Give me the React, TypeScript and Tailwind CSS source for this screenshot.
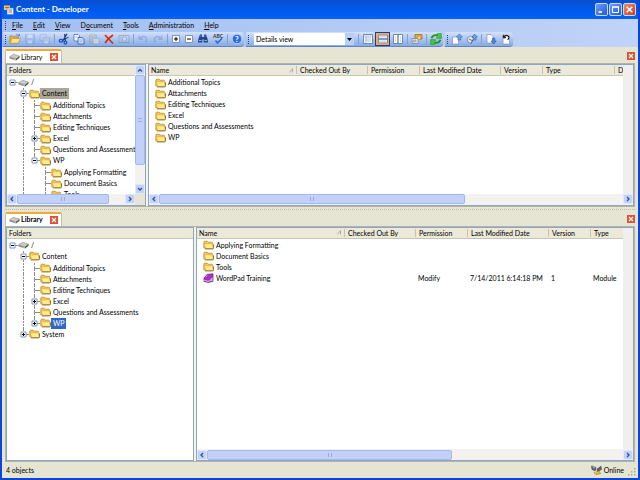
import { useState, type ReactNode } from "react";
import clsx from "clsx";

interface TreeNode {
  name: string;
  icon?: "drive" | "folder";
  state?: "open" | "closed";
  children?: TreeNode[];
}

interface LibraryItem {
  name: string;
  icon?: "folder" | "module";
  permission?: string;
  modified?: string;
  version?: string;
  type?: string;
}

const topTree: TreeNode = {
  name: "/",
  icon: "drive",
  state: "open",
  children: [
    {
      name: "Content",
      state: "open",
      children: [
        { name: "Additional Topics" },
        { name: "Attachments" },
        { name: "Editing Techniques" },
        { name: "Excel", state: "closed" },
        { name: "Questions and Assessments" },
        {
          name: "WP",
          state: "open",
          children: [
            { name: "Applying Formatting" },
            { name: "Document Basics" },
            { name: "Tools" },
          ],
        },
      ],
    },
    { name: "System", state: "closed" },
  ],
};

const bottomTree: TreeNode = {
  name: "/",
  icon: "drive",
  state: "open",
  children: [
    {
      name: "Content",
      state: "open",
      children: [
        { name: "Additional Topics" },
        { name: "Attachments" },
        { name: "Editing Techniques" },
        { name: "Excel", state: "closed" },
        { name: "Questions and Assessments" },
        { name: "WP", state: "closed" },
      ],
    },
    { name: "System", state: "closed" },
  ],
};

const topItems: LibraryItem[] = [
  { name: "Additional Topics" },
  { name: "Attachments" },
  { name: "Editing Techniques" },
  { name: "Excel" },
  { name: "Questions and Assessments" },
  { name: "WP" },
];

const bottomItems: LibraryItem[] = [
  { name: "Applying Formatting" },
  { name: "Document Basics" },
  { name: "Tools" },
  {
    name: "WordPad Training",
    icon: "module",
    permission: "Modify",
    modified: "7/14/2011 6:14:18 PM",
    version: "1",
    type: "Module",
  },
];

// text before the access key, the key, text after it
const menus: [string, string, string][] = [
  ["", "F", "ile"],
  ["", "E", "dit"],
  ["", "V", "iew"],
  ["D", "o", "cument"],
  ["", "T", "ools"],
  ["", "A", "dministration"],
  ["", "H", "elp"],
];

/* ---------- icons ---------- */

function FolderIcon() {
  return (
    <svg viewBox="0 0 11 10" className="h-[10px] w-[11px] shrink-0">
      <path d="M.8 7.8V2.2Q.8 1.2 1.8 1.2H4.2L5.2 2.2H8.6Q9.6 2.2 9.6 3.2V8H2Z" fill="#f2c54e" stroke="#bf8f34" strokeWidth=".8" />
      <path d="M1.4 3.8H8.4Q9.3 3.8 9.6 4.6L10.3 8.6H2.6Z" fill="#ffed8c" stroke="#dba63e" strokeWidth=".6" />
      <path d="M1.8 8.9H9.4Q10.5 8.9 10.5 7.6V4.4" fill="none" stroke="#8a6420" strokeWidth=".9" />
    </svg>
  );
}

function DriveIcon() {
  return (
    <svg viewBox="0 0 11 8" className="h-2 w-[11px] shrink-0">
      <path d="M.5 3.8 4.5 1.2 10.5 3 7 6Z" fill="#c9c9c9" stroke="#8a8a8a" strokeWidth=".5" />
      <path d="M.5 3.8 7 6V7.6L.5 5.4Z" fill="#8f8f8f" />
      <path d="M7 6 10.5 3V4.8L7 7.6Z" fill="#4a4a4a" />
      <circle cx="6" cy="6.4" r=".5" fill="#d8ffd0" />
    </svg>
  );
}

function ModuleIcon() {
  return (
    <svg viewBox="0 0 11 10" className="h-[10px] w-[11px] shrink-0">
      <path d="M1 5 4 1.4 10 .8V8.4L5 9.4 1 8.4Z" fill="#b02fc4" stroke="#6d1480" strokeWidth=".7" />
      <path d="M1.2 7.2 4.8 8.4 7 7.8" fill="none" stroke="#f4d6f8" strokeWidth=".9" />
      <path d="M6.4 7.8 9.6 4V8.2Z" fill="#9fd8b8" />
      <path d="M2.4 4.4 4.6 2.2" stroke="#e28af0" strokeWidth=".9" />
    </svg>
  );
}

function Icon({ children, dim = false }: { children: ReactNode; dim?: boolean }) {
  return (
    <svg viewBox="0 0 12 12" className={clsx("size-3 shrink-0", dim && "opacity-40")} fill="none">
      {children}
    </svg>
  );
}

const icons = {
  open: (
    <Icon>
      <path d="M1 10V3H4L5 4H9V10Z" fill="#e8b53c" stroke="#a87a1c" strokeWidth=".7" />
      <path d="M1 10.2 3 5.5H11.5L9 10.2Z" fill="#ffe58a" stroke="#b98a2c" strokeWidth=".6" />
      <path d="M6.5 2.5Q8.5.5 10 2.5M10.4 1V3H8.6" stroke="#3c64b4" strokeWidth=".7" />
    </Icon>
  ),
  save: (
    <Icon dim>
      <path d="M1.5 1.5H10.5V10.5H2.5L1.5 9.5Z" fill="#93aee0" stroke="#6f8cc4" />
      <path d="M3.5 1.5H8.5V5H3.5ZM4 7.5H8V10.5H4Z" fill="#eef3fc" />
    </Icon>
  ),
  saveAll: (
    <Icon dim>
      <path d="M1 1.5H7V7.5H1Z" fill="#c6d4ee" stroke="#7d92c0" strokeWidth=".8" />
      <path d="M4 4.5H10.5V10.5H4Z" fill="#b8c6e0" stroke="#7d92c0" strokeWidth=".8" />
      <path d="M5.5 8H9V10.5H5.5Z" fill="#f3f6fc" />
    </Icon>
  ),
  cut: (
    <Icon>
      <path d="M9 .8 5 7.6M6.6 1 7.4 8" stroke="#28386c" strokeWidth="1.2" />
      <path d="M5 7 10.5 4.2" stroke="#28386c" />
      <ellipse cx="3" cy="7.8" rx="1.7" ry="1.4" stroke="#1c4cc0" strokeWidth="1.3" />
      <ellipse cx="7.4" cy="9.6" rx="1.4" ry="1.5" stroke="#1c4cc0" strokeWidth="1.3" />
    </Icon>
  ),
  copy: (
    <Icon>
      <path d="M1 1.5H5L6.5 3V8H1Z" fill="#fff" stroke="#4a6cb8" strokeWidth=".8" />
      <path d="M5 4.5H9.2L11 6.2V11H5Z" fill="#dbe7ff" stroke="#2c54b0" strokeWidth=".8" />
      <path d="M6.3 7H9.6M6.3 8.8H9.6M2.3 4H4.5" stroke="#6d92dc" strokeWidth=".7" />
    </Icon>
  ),
  paste: (
    <Icon dim>
      <path d="M1.5 2H8.5V10H1.5Z" fill="#b4ad98" stroke="#8c8672" strokeWidth=".8" />
      <path d="M3.5 1H6.5V3H3.5Z" fill="#dedede" stroke="#888" strokeWidth=".5" />
      <path d="M5 5.5H11V11H5Z" fill="#f4f4f4" stroke="#888" strokeWidth=".7" />
    </Icon>
  ),
  remove: (
    <Icon>
      <path d="M2 2 10 10.5M10 2Q6 4.5 2 10" stroke="#d8280c" strokeWidth="1.6" />
    </Icon>
  ),
  properties: (
    <Icon dim>
      <path d="M1 2.5H11V9.5H1Z" fill="#d5dbe6" stroke="#66728c" strokeWidth=".9" />
      <circle cx="6.5" cy="6" r="2.3" fill="#f1f4fa" stroke="#66728c" strokeWidth=".9" />
      <path d="M2.3 4.2H4M2.3 6H3.5M2.3 8H4M8.4 8 10.5 10.6" stroke="#66728c" strokeWidth=".8" />
    </Icon>
  ),
  undo: (
    <Icon dim>
      <path d="M2.2 2.5V6H6M2.5 5.8Q5.5 2 9 4.5Q10.5 7 8.5 9.3" stroke="#5b7cc4" strokeWidth="1.3" />
    </Icon>
  ),
  redo: (
    <Icon dim>
      <path d="M9.8 2.5V6H6M9.5 5.8Q6.5 2 3 4.5Q1.5 7 3.5 9.3" stroke="#5b7cc4" strokeWidth="1.3" />
    </Icon>
  ),
  expand: (
    <Icon>
      <path d="M2.5 2.5H9.5V9.5H2.5Z" fill="#fff" stroke="#8294b4" />
      <path d="M4 6H8M6 4V8" stroke="#000" />
    </Icon>
  ),
  collapse: (
    <Icon>
      <path d="M2.5 2.5H9.5V9.5H2.5Z" fill="#fff" stroke="#8294b4" />
      <path d="M4 6H8" stroke="#000" />
    </Icon>
  ),
  find: (
    <Icon>
      <path d="M3 1.5H5L5.4 9.5H1Q1 6 3 1.5ZM7 1.5H9Q11 6 11 9.5H6.6Z" fill="#24448c" />
      <path d="M5 4H7V6.5H5Z" fill="#24448c" />
      <path d="M2 7.5H4.5M7.5 7.5H10M3.5 3H4.5M7.5 3H8.5" stroke="#9cbcf0" strokeWidth=".9" />
    </Icon>
  ),
  spelling: (
    <Icon>
      <text x="1" y="4.5" fontSize="5" fontWeight="700" fill="#333">ABC</text>
      <path d="M3.5 7.5 5.5 10 10 5.2" stroke="#2c6cd8" strokeWidth="1.5" />
    </Icon>
  ),
  help: (
    <Icon>
      <circle cx="6" cy="6" r="4.8" fill="#2c6ce0" stroke="#c4d8fa" strokeWidth=".9" />
      <text x="4" y="8.8" fontSize="8" fontWeight="700" fill="#fff">?</text>
    </Icon>
  ),
  single: (
    <Icon>
      <path d="M1.5 1.5H10.5V10.5H1.5Z" fill="#fff" stroke="#7287ac" />
      <path d="M3 3H9V9H3Z" fill="#cfe0fa" />
      <path d="M1.5 3H10.5M4 3V10" stroke="#96abd0" strokeWidth=".6" />
    </Icon>
  ),
  horizontal: (
    <Icon>
      <path d="M1.5 2H10.5V10H1.5Z" fill="#e9f1ff" stroke="#8c8c94" />
      <path d="M1 6H11" stroke="#62749c" strokeWidth="1.4" />
      <path d="M2.5 3.7H9.5M2.5 8.2H9.5" stroke="#c4d4f0" />
    </Icon>
  ),
  vertical: (
    <Icon>
      <path d="M1.5 1.5H10.5V10.5H1.5Z" fill="#fff" stroke="#7287ac" />
      <path d="M6 1V11" stroke="#7287ac" strokeWidth="1.4" />
      <path d="M3.5 3V9.5M8.5 3V9.5" stroke="#d2e0f5" />
    </Icon>
  ),
  hand: (
    <Icon>
      <path d="M4 1.5H11V6H4Z" fill="#eba91c" stroke="#8c641c" strokeWidth=".7" />
      <path d="M.8 5.5H7V10.5H1.6Z" fill="#f4f4f4" stroke="#6c7a98" strokeWidth=".7" />
      <path d="M2 7.2H5.5M2 8.8H5.5" stroke="#58688c" strokeWidth=".7" />
      <path d="M6 4.8 8.5 3.2 10.2 4.6 8 6.6Z" fill="#ffe2a0" stroke="#a87a2c" strokeWidth=".4" />
    </Icon>
  ),
  refresh: (
    <Icon>
      <path d="M1.6 5.2Q2.5 2.2 6 2.2H8" stroke="#1c9420" strokeWidth="1.8" />
      <path d="M7.6.4 11.4.6V5.4H6.4Z" fill="#46c83e" stroke="#158a18" strokeWidth=".5" />
      <path d="M10.4 6.8Q9.5 9.8 6 9.8H4" stroke="#1c9420" strokeWidth="1.8" />
      <path d="M4.4 11.6.6 11.4V6.6H5.6Z" fill="#46c83e" stroke="#158a18" strokeWidth=".5" />
    </Icon>
  ),
  checkIn: (
    <Icon>
      <path d="M1.5 4H7.5V11H1.5Z" fill="#fff" stroke="#8090ac" strokeWidth=".7" />
      <path d="M8.4 1 11.4 4H9.8V7H7V4H5.4Z" fill="#6ea6e8" stroke="#345fa8" strokeWidth=".6" />
    </Icon>
  ),
  publish: (
    <Icon>
      <path d="M1 5 4.5 3.2 8 5 5 10.5 2 9Z" fill="#e3e7ee" stroke="#687690" strokeWidth=".7" />
      <path d="M3 6 7 8M5 10.5 6.8 7" stroke="#54617c" strokeWidth=".9" />
      <path d="M8.6 1.2 11.3 4H10V7H7.2V4H6Z" fill="#6ea6e8" stroke="#345fa8" strokeWidth=".7" />
    </Icon>
  ),
  checkOut: (
    <Icon>
      <path d="M2 1.5H6L8 3.5V10H2Z" fill="#fff" stroke="#8090ac" strokeWidth=".7" />
      <path d="M7.4 5.2H9.8V8H11.3L8.6 11 5.9 8H7.4Z" fill="#4c8ae0" stroke="#2c559c" strokeWidth=".6" />
    </Icon>
  ),
  revert: (
    <Icon>
      <path d="M3 3H9.5V11H3Z" fill="#fff" stroke="#8090ac" strokeWidth=".7" />
      <path d="M3.4 1.8V4.6H6M3.6 4.2Q6 1 8.5 3.4Q9.4 5 7.6 7" stroke="#222" strokeWidth="1.1" />
    </Icon>
  ),
};

/* ---------- toolbar ---------- */

interface ToolButtonProps {
  label: string;
  icon: ReactNode;
  active?: boolean;
  narrow?: boolean;
}

function ToolButton({ label, icon, active, narrow }: ToolButtonProps) {
  return (
    <button
      aria-label={label}
      className={clsx(
        "flex h-[14px] items-center justify-center",
        narrow ? "w-[13px]" : "w-[15px]",
        active && "border border-[#1c3c94] bg-[#f5a95c]"
      )}
    >
      {icon}
    </button>
  );
}

function Separator() {
  return <span className="mr-px ml-0.5 h-[10px] w-px shrink-0 bg-[#7f9fd8]" />;
}

function Grip() {
  return (
    <span className="flex w-1 shrink-0 flex-col items-center gap-px">
      {[0, 1, 2, 3, 4].map((i) => (
        <span key={i} className="size-px bg-[#27418f]" />
      ))}
    </span>
  );
}

function ToolbarGroup({ children }: { children: ReactNode }) {
  return (
    <div className="flex h-[15px] items-center rounded-r-sm border-b border-[#5d83c8] bg-linear-to-b from-[#d3e1fa] to-[#87aae3]">
      <Grip />
      {children}
    </div>
  );
}

function Toolbar() {
  const [view, setView] = useState("Details view");

  return (
    <div className="flex gap-0.5 pl-px">
      <ToolbarGroup>
        <ToolButton label="Open" icon={icons.open} />
        <ToolButton label="Save" icon={icons.save} />
        <ToolButton label="Save All" icon={icons.saveAll} />
        <Separator />
        <ToolButton label="Cut" icon={icons.cut} />
        <ToolButton label="Copy" icon={icons.copy} />
        <ToolButton label="Paste" icon={icons.paste} />
        <ToolButton label="Delete" icon={icons.remove} />
        <ToolButton label="Properties" icon={icons.properties} />
        <Separator />
        <ToolButton label="Undo" icon={icons.undo} />
        <ToolButton label="Redo" icon={icons.redo} />
        <Separator />
        <ToolButton label="Expand" icon={icons.expand} narrow />
        <ToolButton label="Collapse" icon={icons.collapse} narrow />
        <ToolButton label="Find" icon={icons.find} />
        <ToolButton label="Spelling" icon={icons.spelling} />
        <Separator />
        <ToolButton label="Help" icon={icons.help} />
      </ToolbarGroup>
      <ToolbarGroup>
        <div className="relative mr-0.5 ml-1 flex h-3 w-[100px] bg-white">
          <select
            aria-label="View"
            value={view}
            onChange={(e) => setView(e.target.value)}
            className="w-full appearance-none pl-0.5 leading-3 outline-none"
          >
            <option>Details view</option>
            <option>Icon view</option>
          </select>
          <span className="pointer-events-none absolute inset-y-0 right-0 flex w-[9px] items-center justify-center bg-[#b9d0f6]">
            <svg viewBox="0 0 5 3" className="h-[3px] w-[5px]">
              <path d="M0 0H5L2.5 3Z" fill="#000" />
            </svg>
          </span>
        </div>
        <Separator />
        <ToolButton label="Single pane" icon={icons.single} />
        <ToolButton label="Split horizontally" icon={icons.horizontal} active />
        <ToolButton label="Split vertically" icon={icons.vertical} />
        <Separator />
        <ToolButton label="Details" icon={icons.hand} />
        <Separator />
        <ToolButton label="Refresh" icon={icons.refresh} />
      </ToolbarGroup>
      <ToolbarGroup>
        <ToolButton label="Check in" icon={icons.checkIn} />
        <ToolButton label="Publish" icon={icons.publish} />
        <Separator />
        <ToolButton label="Check out" icon={icons.checkOut} />
        <ToolButton label="Undo check out" icon={icons.revert} />
      </ToolbarGroup>
    </div>
  );
}

/* ---------- window chrome ---------- */

function CaptionButton({ label, close, children }: { label: string; close?: boolean; children: ReactNode }) {
  return (
    <button
      aria-label={label}
      className={clsx(
        "flex size-[13px] items-center justify-center rounded-xs border border-[#c9d9fb]",
        close ? "bg-linear-to-br from-[#ee8b6c] to-[#cc3a12]" : "bg-linear-to-br from-[#6f9bf5] to-[#2257d8]"
      )}
    >
      <svg viewBox="0 0 9 9" className="size-[9px]" fill="none" stroke="#fff">
        {children}
      </svg>
    </button>
  );
}

function TitleBar() {
  return (
    <header className="flex h-[19px] items-center gap-0.5 bg-linear-to-b from-[#0a4fd0] via-[#0058ea] to-[#0262fa] px-0.5">
      <svg viewBox="0 0 10 10" className="size-[10px]">
        <path d="M0 .5H6V5H0Z" fill="#f1c75a" />
        <path d="M3 3H9.5V9.5H3Z" fill="#e8ecf4" stroke="#6c7890" strokeWidth=".6" />
        <path d="M1 2.5H5M4.5 5H8M4.5 7H8" stroke="#6c5a2c" strokeWidth=".7" />
      </svg>
      <h1 className="flex-1 text-[8px] font-bold text-white">Content - Developer</h1>
      <div className="flex gap-px">
        <CaptionButton label="Minimize">
          <path d="M1.5 7H5" strokeWidth="1.6" />
        </CaptionButton>
        <CaptionButton label="Maximize">
          <path d="M1.5 2V7.5H7.5V2" />
          <path d="M1 2H8" strokeWidth="1.6" />
        </CaptionButton>
        <CaptionButton label="Close" close>
          <path d="M1.7 1.7 7.3 7.3M7.3 1.7 1.7 7.3" strokeWidth="1.5" />
        </CaptionButton>
      </div>
    </header>
  );
}

function CloseBox({ label }: { label: string }) {
  return (
    <button aria-label={label} className="flex size-2 items-center justify-center bg-[#dd5135]">
      <svg viewBox="0 0 8 8" className="size-2" stroke="#fff" strokeWidth="1.2">
        <path d="M2 2 6 6M6 2 2 6" />
      </svg>
    </button>
  );
}

/* ---------- scroll bars ---------- */

type Direction = "up" | "down" | "left" | "right";

const arrows: Record<Direction, string> = {
  up: "M2 5.5 4 3.5 6 5.5",
  down: "M2 3 4 5 6 3",
  left: "M5 2 3 4 5 6",
  right: "M3 2 5 4 3 6",
};

function ScrollArrow({ direction }: { direction: Direction }) {
  return (
    <button
      aria-label={`Scroll ${direction}`}
      className="flex size-[10px] shrink-0 items-center justify-center rounded-xs border border-[#dfe8fd] bg-[#c1d3fb]"
    >
      <svg viewBox="0 0 8 8" className="size-2" fill="none" stroke="#3f5484" strokeWidth="1.4">
        <path d={arrows[direction]} />
      </svg>
    </button>
  );
}

function ScrollBar({ vertical, ratio }: { vertical?: boolean; ratio: number }) {
  return (
    <div className={clsx("flex bg-[#f3f2ee]", vertical ? "w-[10px] flex-col" : "h-[11px] items-center")}>
      <ScrollArrow direction={vertical ? "up" : "left"} />
      <div className={clsx("flex min-h-0 min-w-0 flex-1", vertical ? "flex-col" : "h-[10px]")}>
        <div
          className="flex items-center justify-center rounded-xs border border-[#a3b9ec] bg-[#c3d1fa]"
          style={{ flexBasis: `${ratio}%` }}
        >
          <span className={clsx("size-1 border-[#94ade8]", vertical ? "border-y" : "border-x")} />
        </div>
      </div>
      <ScrollArrow direction={vertical ? "down" : "right"} />
    </div>
  );
}

/* ---------- folder tree ---------- */

interface BranchProps {
  kind: "line" | "blank" | "tee" | "end";
  state?: "open" | "closed";
  root?: boolean;
}

function Branch({ kind, state, root }: BranchProps) {
  return (
    <svg viewBox="0 0 11 11" className="size-[11px] shrink-0" fill="none" stroke="#8d8d8d">
      {(kind === "line" || kind === "tee") && <path d="M5.5 0V11" strokeDasharray="2 1" />}
      {kind === "end" && !root && <path d="M5.5 0V5.5" strokeDasharray="2 1" />}
      {(kind === "tee" || kind === "end") && <path d="M5 5.5H11" />}
      {state && (
        <>
          <path d="M3 3H8V8H3Z" fill="#fff" stroke="#7b92b8" />
          <path d={state === "open" ? "M4 5.5H7" : "M4 5.5H7M5.5 4V7"} stroke="#000" />
        </>
      )}
    </svg>
  );
}

interface TreeItemProps {
  node: TreeNode;
  guides?: boolean[];
  last?: boolean;
  selected: string;
  focused: boolean;
  onSelect: (name: string) => void;
}

function TreeItem({ node, guides = [], last = true, selected, focused, onSelect }: TreeItemProps) {
  const isRoot = node.icon === "drive";
  const isSelected = node.name === selected;

  return (
    <li>
      <div className="flex h-[11px] items-center">
        {guides.map((on, i) => (
          <Branch key={i} kind={on ? "line" : "blank"} />
        ))}
        <Branch kind={last ? "end" : "tee"} state={node.state} root={isRoot} />
        {isRoot ? <DriveIcon /> : <FolderIcon />}
        <button
          onClick={() => onSelect(node.name)}
          className={clsx(
            "px-0.5 leading-[11px] whitespace-nowrap",
            isSelected && (focused ? "bg-[#316ac5] text-white" : "bg-[#aca899]")
          )}
        >
          {node.name}
        </button>
      </div>
      {node.children && (
        <ul className={clsx(!isRoot && "pt-px")}>
          {node.children.map((child, i) => (
            <TreeItem
              key={child.name}
              node={child}
              guides={isRoot ? [false] : [...guides, !last]}
              last={i === node.children!.length - 1}
              selected={selected}
              focused={focused}
              onSelect={onSelect}
            />
          ))}
        </ul>
      )}
    </li>
  );
}

interface FolderPaneProps {
  tree: TreeNode;
  initial: string;
  focused?: boolean;
  scrolls?: boolean;
}

function FolderPane({ tree, initial, focused = false, scrolls }: FolderPaneProps) {
  const [selected, setSelected] = useState(initial);

  return (
    <div
      className={clsx(
        "flex shrink-0 flex-col border border-[#8ba6c8] bg-white",
        scrolls ? "w-[140px]" : "w-[188px]"
      )}
    >
      <div className="flex min-h-0 flex-1">
        <div className="flex min-w-0 flex-1 flex-col">
          <h2 className="h-[11px] shrink-0 border-b border-[#c9c5b2] bg-[#ebe9da] pl-0.5 leading-[11px]">Folders</h2>
          <ul className="min-h-0 flex-1 overflow-hidden pt-px">
            <TreeItem node={tree} selected={selected} focused={focused} onSelect={setSelected} />
          </ul>
        </div>
        {scrolls && <ScrollBar vertical ratio={83} />}
      </div>
      {scrolls && (
        <div className="flex bg-[#e6e4d3]">
          <div className="flex-1">
            <ScrollBar ratio={85} />
          </div>
          <span className="w-[10px]" />
        </div>
      )}
    </div>
  );
}

/* ---------- item list ---------- */

function ListPane({ items, ratio }: { items: LibraryItem[]; ratio: number }) {
  const head = "border-b border-[#c9c5b2] bg-[#ebe9da] p-0 text-left font-normal";
  const label = "block border-l border-[#c5c2b0] pl-[3px] leading-2";

  return (
    <div className="flex min-w-0 flex-1 flex-col border border-[#8ba6c8] bg-white">
      <div className="flex min-h-0 flex-1">
        <div className="min-w-0 flex-1 overflow-hidden">
          <table className="w-full table-fixed border-separate border-spacing-0 whitespace-nowrap">
            <colgroup>
              <col className="w-[147px]" />
              <col className="w-[71px]" />
              <col className="w-[52px]" />
              <col className="w-[81px]" />
              <col className="w-[42px]" />
              <col className="w-[72px]" />
              <col />
            </colgroup>
            <thead>
              <tr className="h-[11px]">
                <th className={head}>
                  <span className="flex items-center justify-between px-0.5 leading-2">
                    Name
                    <svg viewBox="0 0 5 5" className="size-[5px]" fill="none" stroke="#a5a28f" strokeWidth=".8">
                      <path d="M.5 4.5 3.5 .5V4.5" />
                    </svg>
                  </span>
                </th>
                <th className={head}><span className={label}>Checked Out By</span></th>
                <th className={head}><span className={label}>Permission</span></th>
                <th className={head}><span className={label}>Last Modified Date</span></th>
                <th className={head}><span className={label}>Version</span></th>
                <th className={head}><span className={label}>Type</span></th>
                <th className={clsx(head, "overflow-hidden")}><span className={label}>D</span></th>
              </tr>
            </thead>
            <tbody className="before:block before:h-px">
              {items.map((item) => (
                <tr key={item.name} className="h-[11px]">
                  <td className="p-0 pl-[6px]">
                    <span className="flex h-[11px] items-center gap-0.5">
                      {item.icon === "module" ? <ModuleIcon /> : <FolderIcon />}
                      {item.name}
                    </span>
                  </td>
                  <td className="p-0" />
                  <td className="p-0 pl-[3px]">{item.permission}</td>
                  <td className="p-0 pl-[3px]">{item.modified}</td>
                  <td className="p-0 pl-[3px]">{item.version}</td>
                  <td className="p-0 pl-[3px]">{item.type}</td>
                  <td className="p-0" />
                </tr>
              ))}
            </tbody>
          </table>
        </div>
        <div className="w-[10px] shrink-0 bg-[#f1efec]" />
      </div>
      <ScrollBar ratio={ratio} />
    </div>
  );
}

/* ---------- document group ---------- */

function TabStrip({ active }: { active?: boolean }) {
  return (
    <div className="flex h-[14px] shrink-0 items-center justify-between">
      <div className="flex h-[14px] items-center rounded-t-xs border-x border-t-2 border-x-[#c2bfae] border-t-[#f5a83a] bg-white px-[3px]">
        <DriveIcon />
        <button className={clsx("w-[30px] pl-px text-left", active && "font-bold")}>Library</button>
        <CloseBox label="Close tab" />
      </div>
      <CloseBox label="Close group" />
    </div>
  );
}

export default function App() {
  return (
    <div className="flex h-screen flex-col overflow-hidden border-x-2 border-b-2 border-[#0b45d8] bg-[#e6e4d3] font-[Lato,'Liberation_Sans',sans-serif] text-[7px] leading-[11px] text-black">
      <TitleBar />
      <div className="bg-linear-to-r from-[#a3bff0] to-[#c0d3f8]">
        <nav className="flex h-[13px] items-center pl-px">
          <Grip />
          <ul className="flex gap-[10px] pl-[5px]">
            {menus.map(([before, key, after]) => (
              <li key={key}>
                <button>
                  {before}
                  <u>{key}</u>
                  {after}
                </button>
              </li>
            ))}
          </ul>
        </nav>
        <Toolbar />
      </div>

      <main className="flex min-h-0 flex-1 flex-col px-[3px] pt-0.5">
        <section className="flex min-h-0 flex-[157] flex-col">
          <TabStrip />
          <div className="flex min-h-0 flex-1 gap-0.5 border border-[#b6b3a3] bg-[#f5f3ea]">
            <FolderPane tree={topTree} initial="Content" scrolls />
            <ListPane items={topItems} ratio={66} />
          </div>
        </section>
        <div className="my-0.5 h-px shrink-0 border-t border-dotted border-[#c0bda9]" />
        <section className="flex min-h-0 flex-[249] flex-col">
          <TabStrip active />
          <div className="flex min-h-0 flex-1 gap-0.5 border border-[#b6b3a3] bg-[#f5f3ea]">
            <FolderPane tree={bottomTree} initial="WP" focused />
            <ListPane items={bottomItems} ratio={59} />
          </div>
        </section>
      </main>

      <footer className="flex h-4 shrink-0 items-center justify-between pr-0.5 pl-1">
        <span>4 objects</span>
        <span className="flex items-center gap-0.5">
          <svg viewBox="0 0 11 10" className="h-[10px] w-[11px]">
            <path d="M.5 1 5 2.5 4.5 6 1 4.5ZM6 4 10 1.2 10.5 4.5 6.5 6.5Z" fill="#5d6570" stroke="#333" strokeWidth=".5" />
            <path d="M3 7.5 8 6 9.5 8.5 5 9.6Z" fill="#f0c030" stroke="#7c5c10" strokeWidth=".5" />
            <path d="M4.5 5.5V8M1.5 2 4 3" stroke="#dfe6ee" strokeWidth=".7" />
          </svg>
          Online
          <svg viewBox="0 0 8 8" className="ml-0.5 size-2 self-end" fill="#a8a592">
            <path d="M6 0H7.4V1.4H6ZM3 3H4.4V4.4H3ZM6 3H7.4V4.4H6ZM0 6H1.4V7.4H0ZM3 6H4.4V7.4H3ZM6 6H7.4V7.4H6Z" />
          </svg>
        </span>
      </footer>
    </div>
  );
}
